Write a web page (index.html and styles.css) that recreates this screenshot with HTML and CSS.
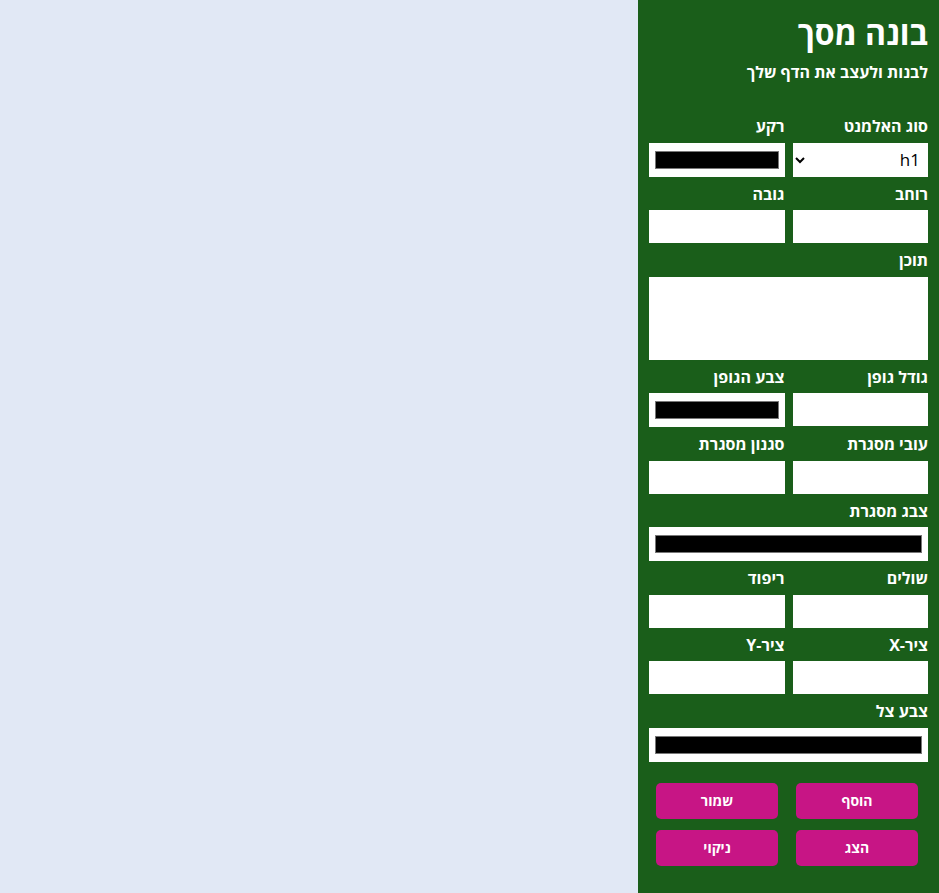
FILE: index.html
```html
<!DOCTYPE html>
<html lang="he">
<head>
<meta charset="utf-8">
<title>בונה מסך</title>
<link rel="stylesheet" href="styles.css">
</head>
<body>
<div class="layout">
  <main class="canvas"></main>
  <aside class="panel" dir="rtl">
    <h1 class="title">בונה מסך</h1>
    <p class="subtitle">לבנות ולעצב את הדף שלך</p>
    <form class="form">
      <div class="row">
        <div class="field">
          <label class="label">סוג האלמנט</label>
          <select class="select"><option>h1</option></select>
        </div>
        <div class="field">
          <label class="label">רקע</label>
          <input class="color" type="color" value="#000000">
        </div>
      </div>
      <div class="row">
        <div class="field">
          <label class="label">רוחב</label>
          <input class="text" type="text">
        </div>
        <div class="field">
          <label class="label">גובה</label>
          <input class="text" type="text">
        </div>
      </div>
      <div class="field">
        <label class="label">תוכן</label>
        <textarea class="area"></textarea>
      </div>
      <div class="row">
        <div class="field">
          <label class="label">גודל גופן</label>
          <input class="text" type="text">
        </div>
        <div class="field">
          <label class="label">צבע הגופן</label>
          <input class="color" type="color" value="#000000">
        </div>
      </div>
      <div class="row">
        <div class="field">
          <label class="label">עובי מסגרת</label>
          <input class="text" type="text">
        </div>
        <div class="field">
          <label class="label">סגנון מסגרת</label>
          <input class="text" type="text">
        </div>
      </div>
      <div class="field">
        <label class="label">צבג מסגרת</label>
        <input class="color" type="color" value="#000000">
      </div>
      <div class="row">
        <div class="field">
          <label class="label">שולים</label>
          <input class="text" type="text">
        </div>
        <div class="field">
          <label class="label">ריפוד</label>
          <input class="text" type="text">
        </div>
      </div>
      <div class="row">
        <div class="field">
          <label class="label">ציר-X</label>
          <input class="text" type="text">
        </div>
        <div class="field">
          <label class="label">ציר-Y</label>
          <input class="text" type="text">
        </div>
      </div>
      <div class="field">
        <label class="label">צבע צל</label>
        <input class="color" type="color" value="#000000">
      </div>
      <div class="buttons">
        <button class="btn" type="button">הוסף</button>
        <button class="btn" type="button">שמור</button>
        <button class="btn" type="button">הצג</button>
        <button class="btn" type="button">ניקוי</button>
      </div>
    </form>
  </aside>
</div>
</body>
</html>
```
FILE: styles.css
```css
* { box-sizing: border-box; }
html, body { margin: 0; padding: 0; height: 100%; }
body {
  font-family: "Open Sans", "Noto Sans", "DejaVu Sans", sans-serif;
  background: #e1e8f5;
}
.layout {
  display: flex;
  min-height: 100vh;
}
.canvas {
  flex: 1;
  background: #e1e8f5;
}
.panel {
  width: 301px;
  background: #1a5e1a;
  color: #fff;
  padding: 13px 11px 10px 11px;
}
.title {
  margin: 0;
  font-size: 32px;
  line-height: 40px;
  font-weight: 700;
}
.subtitle {
  margin: 8px 0 0;
  font-size: 16px;
  line-height: 22px;
  font-weight: 700;
}
.form {
  margin-top: 32px;
  display: flex;
  flex-direction: column;
  gap: 6px;
}
.row {
  display: grid;
  grid-template-columns: 1fr 1fr;
  gap: 8px;
}
.field {
  display: flex;
  flex-direction: column;
}
.label {
  display: block;
  font-size: 16px;
  line-height: 22px;
  font-weight: 700;
  margin-bottom: 5.5px;
}
.text {
  width: 100%;
  height: 33px;
  border: none;
  padding: 4px 8px;
  background: #fff;
  font: inherit;
  font-size: 14px;
}
.select {
  width: 100%;
  height: 34px;
  border: none;
  padding: 0 4px 0 6px;
  background: #fff;
  font-family: inherit;
  font-size: 17px;
  color: #000;
}
.color {
  width: 100%;
  height: 34px;
  border: none;
  padding: 4px;
  background: #fff;
}
.area {
  width: 100%;
  height: 83px;
  border: none;
  resize: none;
  background: #fff;
  font: inherit;
}
.buttons {
  margin: 15px 10px 0 7px;
  display: grid;
  grid-template-columns: 122px 122px;
  justify-content: space-between;
  row-gap: 11px;
}
.btn {
  height: 36px;
  border: none;
  border-radius: 5px;
  background: #c71585;
  color: #fff;
  font-family: inherit;
  font-size: 14px;
  font-weight: 700;
}
```
